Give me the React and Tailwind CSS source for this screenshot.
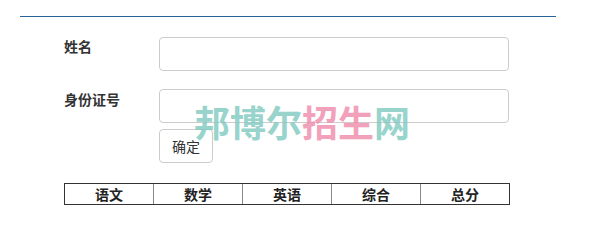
export default function App() {
  const cols = ["语文", "数学", "英语", "综合", "总分"];
  return (
    <div
      className="relative w-[601px] h-[245px] bg-white text-[#333]"
      style={{ fontFamily: '"Noto Sans CJK SC", "Liberation Sans", sans-serif' }}
    >
      <div className="ml-[20px] w-[536px] h-[17px] border-b border-[#2a6496]" />
      <div className="mt-[20px] ml-[64px]">
        <div className="flex items-start">
          <div className="w-[95px] text-[14px] font-bold leading-[20px] mt-[-1px]">姓名</div>
          <div className="w-[350px] h-[34px] rounded-[4px] border border-[#ccc] bg-white" />
        </div>
        <div className="flex items-start mt-[18px]">
          <div className="w-[95px] text-[14px] font-bold leading-[20px]">身份证号</div>
          <div className="flex flex-col gap-[6px]">
            <div className="w-[350px] h-[34px] rounded-[4px] border border-[#ccc] bg-white" />
            <div className="w-[54px] h-[34px] rounded-[4px] border border-[#ccc] bg-white flex items-center justify-center text-[14px] text-[#333]">
              确定
            </div>
          </div>
        </div>
        <div className="mt-[20px] w-[446px] h-[22px] border border-[#333] flex">
          {cols.map((c, i) => (
            <div
              key={c}
              className={
                "flex-1 flex items-center justify-center text-[14px] font-bold leading-[19px] text-[#222] " +
                (i > 0 ? "border-l border-[#888]" : "")
              }
            >
              {c}
            </div>
          ))}
        </div>
      </div>
      <div
        className="absolute left-[194px] top-[99px] text-[36px] font-bold leading-[44px] opacity-80 pointer-events-none"
        style={{ fontFamily: '"Noto Sans CJK SC", serif' }}
      >
        <span className="text-[#7fcac0]">邦博尔</span>
        <span className="text-[#f08aab]">招生</span>
        <span className="text-[#7fcac0]">网</span>
      </div>
    </div>
  );
}
